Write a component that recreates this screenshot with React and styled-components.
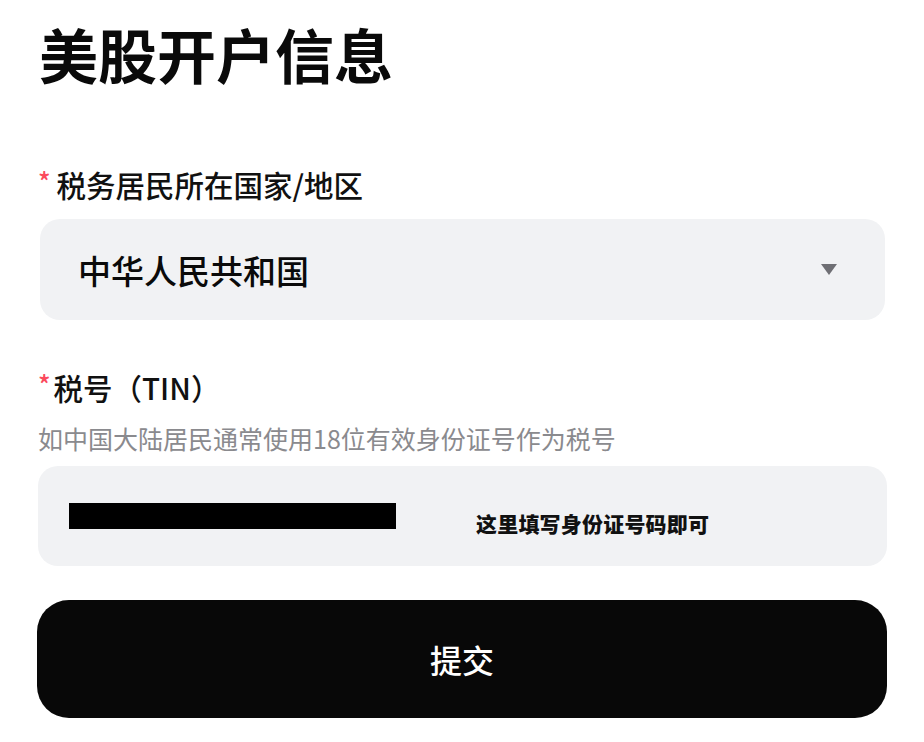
import React from "react";
import styled, { createGlobalStyle } from "styled-components";

const GlobalStyle = createGlobalStyle`
  html, body {
    margin: 0;
    padding: 0;
    background: #ffffff;
  }
  body {
    font-family: "Noto Sans CJK SC", "Noto Sans", sans-serif;
    color: #0a0a0a;
  }
`;

const Page = styled.div`
  width: 924px;
  box-sizing: border-box;
  padding: 14px 38px 0 38px;
  display: flex;
  flex-direction: column;
`;

const Title = styled.h1`
  margin: 0 0 0 1px;
  font-size: 59px;
  line-height: 80px;
  font-weight: 700;
`;

const Field = styled.div`
  display: flex;
  flex-direction: column;
  margin-top: ${(p) => p.top}px;
`;

const Label = styled.div`
  display: flex;
  align-items: center;
  font-size: 29.5px;
  line-height: 40px;
  font-weight: 500;
  color: #111;
`;

const Star = styled.span`
  color: #fb4a5c;
  font-size: 26px;
  margin-right: ${(p) => p.gap}px;
  position: relative;
  top: -3px;
`;

const Hint = styled.div`
  margin-top: 14px;
  font-size: 25px;
  line-height: 34px;
  color: #8a8a8e;
`;

const Box = styled.div`
  margin-top: ${(p) => p.top}px;
  height: ${(p) => p.h}px;
  background: #f1f2f4;
  border-radius: 20px;
  display: flex;
  box-sizing: border-box;
`;

const SelectBox = styled(Box)`
  margin-left: 2px;
  margin-right: 1px;
  padding: 0 48px 0 38px;
  align-items: center;
  justify-content: space-between;
`;

const SelectValue = styled.span`
  font-size: 33px;
  font-weight: 500;
  color: #0a0a0a;
`;

const Caret = styled.span`
  width: 0;
  height: 0;
  border-left: 8px solid transparent;
  border-right: 8px solid transparent;
  border-top: 11px solid #6f6f74;
`;

const InputBox = styled(Box)`
  margin-right: -1px;
  padding: 0 0 0 31px;
  align-items: flex-start;
`;

const Redacted = styled.div`
  width: 327px;
  height: 26px;
  background: #000;
  margin-top: 37px;
`;

const Note = styled.span`
  margin-left: 80px;
  margin-top: 42px;
  font-size: 21px;
  line-height: 30px;
  font-weight: 900;
  color: #111;
  letter-spacing: 0.2px;
`;

const Submit = styled.button`
  margin-top: 34px;
  margin-left: -1px;
  margin-right: -1px;
  height: 118px;
  border: none;
  border-radius: 32px;
  background: #080808;
  color: #ffffff;
  font-family: "Noto Sans CJK SC", sans-serif;
  font-size: 32px;
  font-weight: 500;
  cursor: pointer;
`;

export default function App() {
  return (
    <>
      <GlobalStyle />
      <Page>
        <Title>美股开户信息</Title>

        <Field top={70}>
          <Label>
            <Star gap={6}>*</Star>税务居民所在国家/地区
          </Label>
          <SelectBox top={15} h={101}>
            <SelectValue>中华人民共和国</SelectValue>
            <Caret />
          </SelectBox>
        </Field>

        <Field top={47}>
          <Label>
            <Star gap={3}>*</Star>税号（TIN）
          </Label>
          <Hint>如中国大陆居民通常使用18位有效身份证号作为税号</Hint>
          <InputBox top={11} h={100}>
            <Redacted />
            <Note>这里填写身份证号码即可</Note>
          </InputBox>
        </Field>

        <Submit>提交</Submit>
      </Page>
    </>
  );
}
